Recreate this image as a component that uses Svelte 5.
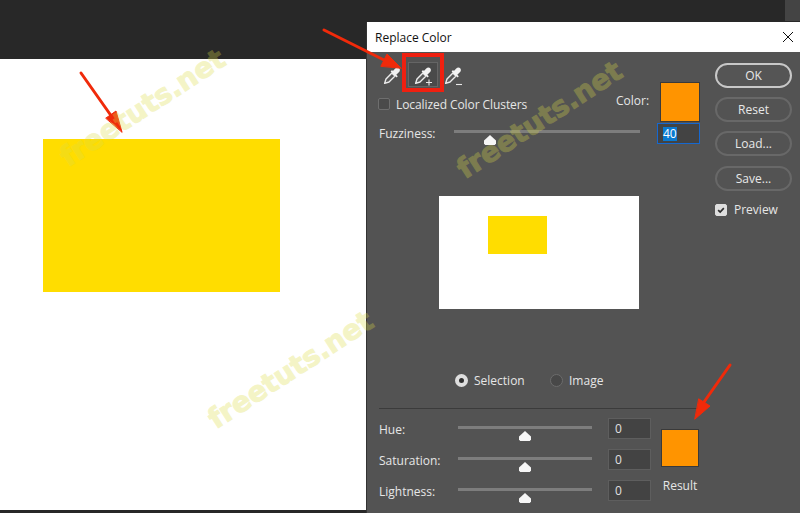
<script lang="ts">
  const tools = [
    { sign: '', active: false },
    { sign: 'plus', active: true },
    { sign: 'minus', active: false },
  ];

  const adjustments = [
    { label: 'Hue:', value: '0' },
    { label: 'Saturation:', value: '0' },
    { label: 'Lightness:', value: '0' },
  ];

  const actions = [
    { label: 'OK', primary: true },
    { label: 'Reset', primary: false },
    { label: 'Load...', primary: false },
    { label: 'Save...', primary: false },
  ];

  const watermarks = [
    { x: 63, y: 144 },
    { x: 460, y: 156 },
    { x: 211, y: 406 },
  ];
</script>

<div class="app">
  <div class="topbar"><span class="tab"></span></div>
  <div class="canvas">
    <div class="shape"></div>
  </div>

  <section class="dialog">
    <header class="title">
      <span>Replace Color</span>
      <svg class="close" width="10" height="10" viewBox="0 0 10 10">
        <path d="M0 0L10 10M10 0L0 10" stroke="#111" stroke-width="1" fill="none" />
      </svg>
    </header>

    <div class="body">
      <div class="main">
        <div class="upper">
          <div class="upper-left">
            <div class="tools">
              {#each tools as tool}
                <span class="tool" class:active={tool.active}>
                  <svg width="20" height="22" viewBox="0 0 20 22" fill="none">
                    <path d="M9.9 9L13 12.1L7 18L2.6 19.4L4 15Z" fill="#5a5a5a" stroke="#ececec" stroke-width="1.4" stroke-linejoin="round" />
                    <path d="M8.6 7.4L14.6 13.4L15.8 12.2L14.3 10.7L16.6 8.6C18.3 7 18.2 5.2 17.2 4.2C16.2 3.2 14.4 3.2 13 4.8L10.9 7L10 6Z" fill="#f2f2f2" />
                    {#if tool.sign === 'plus'}
                      <path d="M13 18.5H19M16 15.5V21.5" stroke="#e8e8e8" stroke-width="1.1" />
                    {:else if tool.sign === 'minus'}
                      <path d="M13 20.5H19" stroke="#e8e8e8" stroke-width="1.1" />
                    {/if}
                  </svg>
                </span>
              {/each}
            </div>
            <label class="check-row">
              <span class="checkbox"></span>
              <span>Localized Color Clusters</span>
            </label>
          </div>
          <div class="color">
            <span class="color-label">Color:</span>
            <span class="swatch"></span>
          </div>
        </div>

        <div class="fuzz">
          <span class="fuzz-label">Fuzziness:</span>
          <span class="slider fuzz-slider"><span class="thumb fuzz-thumb"></span></span>
          <span class="field selected"><span class="sel-text">40</span></span>
        </div>

        <div class="preview">
          <div class="preview-shape"></div>
        </div>

        <div class="radios">
          <span class="radio on"></span>
          <span class="radio-text">Selection</span>
          <span class="radio"></span>
          <span class="radio-text">Image</span>
        </div>

        <div class="divider"></div>

        <div class="adjust">
          <div class="adjust-rows">
            {#each adjustments as row}
              <div class="adjust-row">
                <span class="adjust-label">{row.label}</span>
                <span class="slider adjust-slider"><span class="thumb adjust-thumb"></span></span>
                <span class="field">{row.value}</span>
              </div>
            {/each}
          </div>
          <div class="result">
            <span class="swatch result-swatch"></span>
            <span>Result</span>
          </div>
        </div>
      </div>

      <aside class="side">
        {#each actions as action}
          <button class="action" class:primary={action.primary}>{action.label}</button>
        {/each}
        <label class="preview-check">
          <span class="checkbox checked">
            <svg width="12" height="12" viewBox="0 0 12 12" fill="none">
              <path d="M2.6 6.2L5 8.6L9.4 3.8" stroke="#2c2c2c" stroke-width="2" />
            </svg>
          </span>
          <span>Preview</span>
        </label>
      </aside>
    </div>
  </section>

  <svg class="arrows" width="800" height="513" viewBox="0 0 800 513">
    <g fill="#f02a0a" stroke="#f02a0a" stroke-linecap="round">
      <path d="M81 73L112 117" stroke-width="3" fill="none" />
      <path d="M106 118L116 111L122 132Z" stroke-width="1" />
      <path d="M324 30L384 60" stroke-width="3" fill="none" />
      <path d="M381 66L387 54L401 68Z" stroke-width="1" />
      <path d="M730 365L704 402" stroke-width="3" fill="none" />
      <path d="M699 399L710 406L695 419Z" stroke-width="1" />
    </g>
  </svg>

  {#each watermarks as mark}
    <span class="watermark" style="left: {mark.x}px; top: {mark.y}px;">freetuts.net</span>
  {/each}
</div>

<style>
  :global(body) {
    margin: 0;
  }

  .app {
    position: relative;
    width: 800px;
    height: 513px;
    overflow: hidden;
    background: #282828;
    font-family: "Open Sans", "Noto Sans", sans-serif;
    font-size: 12px;
    color: #e6e6e6;
  }

  .topbar {
    height: 59px;
    display: flex;
    justify-content: flex-end;
  }

  .tab {
    width: 15px;
    height: 21px;
    background: #444;
  }

  .canvas {
    width: 367px;
    height: 451px;
    background: #fff;
    padding: 80px 0 0 43px;
    box-sizing: border-box;
  }

  .shape {
    width: 237px;
    height: 153px;
    background: #ffdd00;
  }

  .dialog {
    position: absolute;
    left: 366px;
    top: 22px;
    width: 434px;
    height: 491px;
    border-left: 1px solid #333;
    box-sizing: border-box;
    background: #535353;
    display: flex;
    flex-direction: column;
  }

  .title {
    height: 30px;
    flex: none;
    background: #fff;
    color: #111;
    display: flex;
    align-items: center;
    justify-content: space-between;
    padding: 0 7px 0 8px;
  }

  .body {
    flex: 1;
    display: flex;
  }

  .main {
    width: 337px;
    flex: none;
    padding-left: 12px;
    box-sizing: border-box;
  }

  .upper {
    display: flex;
    height: 70px;
  }

  .upper-left {
    width: 238px;
    flex: none;
  }

  .tools {
    display: flex;
    height: 38px;
    padding-top: 10px;
    box-sizing: border-box;
    align-items: flex-start;
  }

  .tool {
    width: 30px;
    height: 25px;
    display: flex;
    align-items: center;
    justify-content: center;
    box-sizing: border-box;
    position: relative;
  }

  .tool:first-child {
    margin-left: -2px;
    margin-right: 1px;
  }

  .tool.active {
    background: #4a4a4a;
    border: 1px solid #656565;
  }

  .tool.active::after {
    content: "";
    position: absolute;
    inset: -10px -7px -6px -7px;
    border: 4px solid #ef2010;
  }

  .check-row {
    display: flex;
    align-items: center;
    gap: 6px;
    margin: 7px 0 0 -1px;
    height: 14px;
    white-space: nowrap;
    letter-spacing: -0.08px;
  }

  .checkbox {
    width: 12px;
    height: 12px;
    flex: none;
    box-sizing: border-box;
    border: 1px solid #6e6e6e;
    border-radius: 2px;
    background: #4a4a4a;
  }

  .checkbox.checked {
    background: #dedede;
    border-color: #dedede;
    display: flex;
    align-items: center;
    justify-content: center;
  }

  .color {
    display: flex;
    align-items: flex-end;
    gap: 11px;
    padding-top: 16px;
    margin-left: -1px;
  }

  .color-label {
    line-height: 14px;
    padding-bottom: 14px;
  }

  .swatch {
    display: block;
    width: 40px;
    height: 40px;
    box-sizing: border-box;
    background: #ff9400;
    border: 1px solid #3a3a3a;
  }

  .fuzz {
    display: flex;
    align-items: center;
    height: 22px;
  }

  .fuzz-label {
    width: 75px;
    flex: none;
  }

  .slider {
    display: block;
    height: 3px;
    background: #7d7d7d;
    position: relative;
    align-self: flex-start;
    margin-top: 8px;
  }

  .fuzz-slider {
    width: 186px;
    margin-right: 17px;
  }

  .thumb {
    position: absolute;
    top: 5px;
    width: 12px;
    height: 10px;
    background: #f6f6f6;
    clip-path: polygon(50% 0, 100% 55%, 100% 85%, 90% 100%, 10% 100%, 0 85%, 0 55%);
  }

  .fuzz-thumb {
    left: 30px;
  }

  .field {
    width: 43px;
    height: 21px;
    flex: none;
    box-sizing: border-box;
    background: #434343;
    border: 1px solid #5e5e5e;
    padding-left: 6px;
    line-height: 19px;
    color: #e0e0e0;
  }

  .field.selected {
    border: 1px solid #1668d0;
    padding-left: 5px;
  }

  .sel-text {
    display: inline-block;
    background: #0a7ad0;
    color: #fff;
    line-height: 14px;
  }

  .preview {
    width: 200px;
    height: 113px;
    margin: 52px 0 0 60px;
    padding: 20px 0 0 49px;
    box-sizing: border-box;
    background: #fff;
  }

  .preview-shape {
    width: 59px;
    height: 38px;
    background: #ffdd00;
  }

  .radios {
    display: flex;
    align-items: center;
    height: 14px;
    margin: 64px 0 0 76px;
  }

  .radio {
    width: 13px;
    height: 13px;
    box-sizing: border-box;
    border-radius: 50%;
    background: #484848;
    border: 1px solid #6c6c6c;
    margin-right: 6px;
  }

  .radio.on {
    background: #2e2e2e;
    border: 4px solid #dedede;
  }

  .radio-text {
    width: 76px;
  }

  .radio-text:last-child {
    width: auto;
  }

  .divider {
    width: 322px;
    height: 1px;
    margin: 21px 0 0 0;
    background: #3b3b3b;
  }

  .adjust {
    display: flex;
    padding-top: 9px;
    gap: 10px;
  }

  .adjust-rows {
    display: flex;
    flex-direction: column;
    gap: 10px;
  }

  .adjust-row {
    display: flex;
    height: 21px;
    align-items: center;
  }

  .adjust-label {
    width: 79px;
    flex: none;
    padding-top: 2px;
  }

  .adjust-slider {
    width: 134px;
    margin-right: 16px;
  }

  .adjust-thumb {
    left: 61px;
  }

  .result {
    display: flex;
    flex-direction: column;
    align-items: center;
    gap: 10px;
    padding-top: 11px;
    width: 38px;
  }

  .result-swatch {
    width: 38px;
    height: 38px;
    flex: none;
  }

  .side {
    padding: 11px 0 0 11px;
    display: flex;
    flex-direction: column;
  }

  .action {
    width: 77px;
    height: 25px;
    box-sizing: border-box;
    margin: 0 0 9px 0;
    padding: 0 0 1px;
    border-radius: 13px;
    background: #535353;
    border: 2px solid #686868;
    color: #e8e8e8;
    font: inherit;
  }

  .action:nth-child(3) {
    margin-bottom: 10px;
  }

  .action.primary {
    border-color: #c8c8c8;
    background: #555;
  }

  .preview-check {
    display: flex;
    align-items: center;
    gap: 7px;
    margin-top: 1px;
  }

  .arrows {
    position: absolute;
    left: 0;
    top: 0;
    pointer-events: none;
  }

  .watermark {
    position: absolute;
    font-family: "DejaVu Sans", sans-serif;
    font-weight: 700;
    font-size: 28px;
    line-height: 32px;
    white-space: nowrap;
    color: rgb(220, 220, 70);
    -webkit-text-stroke: 1px rgb(220, 220, 70);
    opacity: 0.3;
    transform: rotate(-33deg);
    transform-origin: 0 50%;
    pointer-events: none;
  }
</style>
